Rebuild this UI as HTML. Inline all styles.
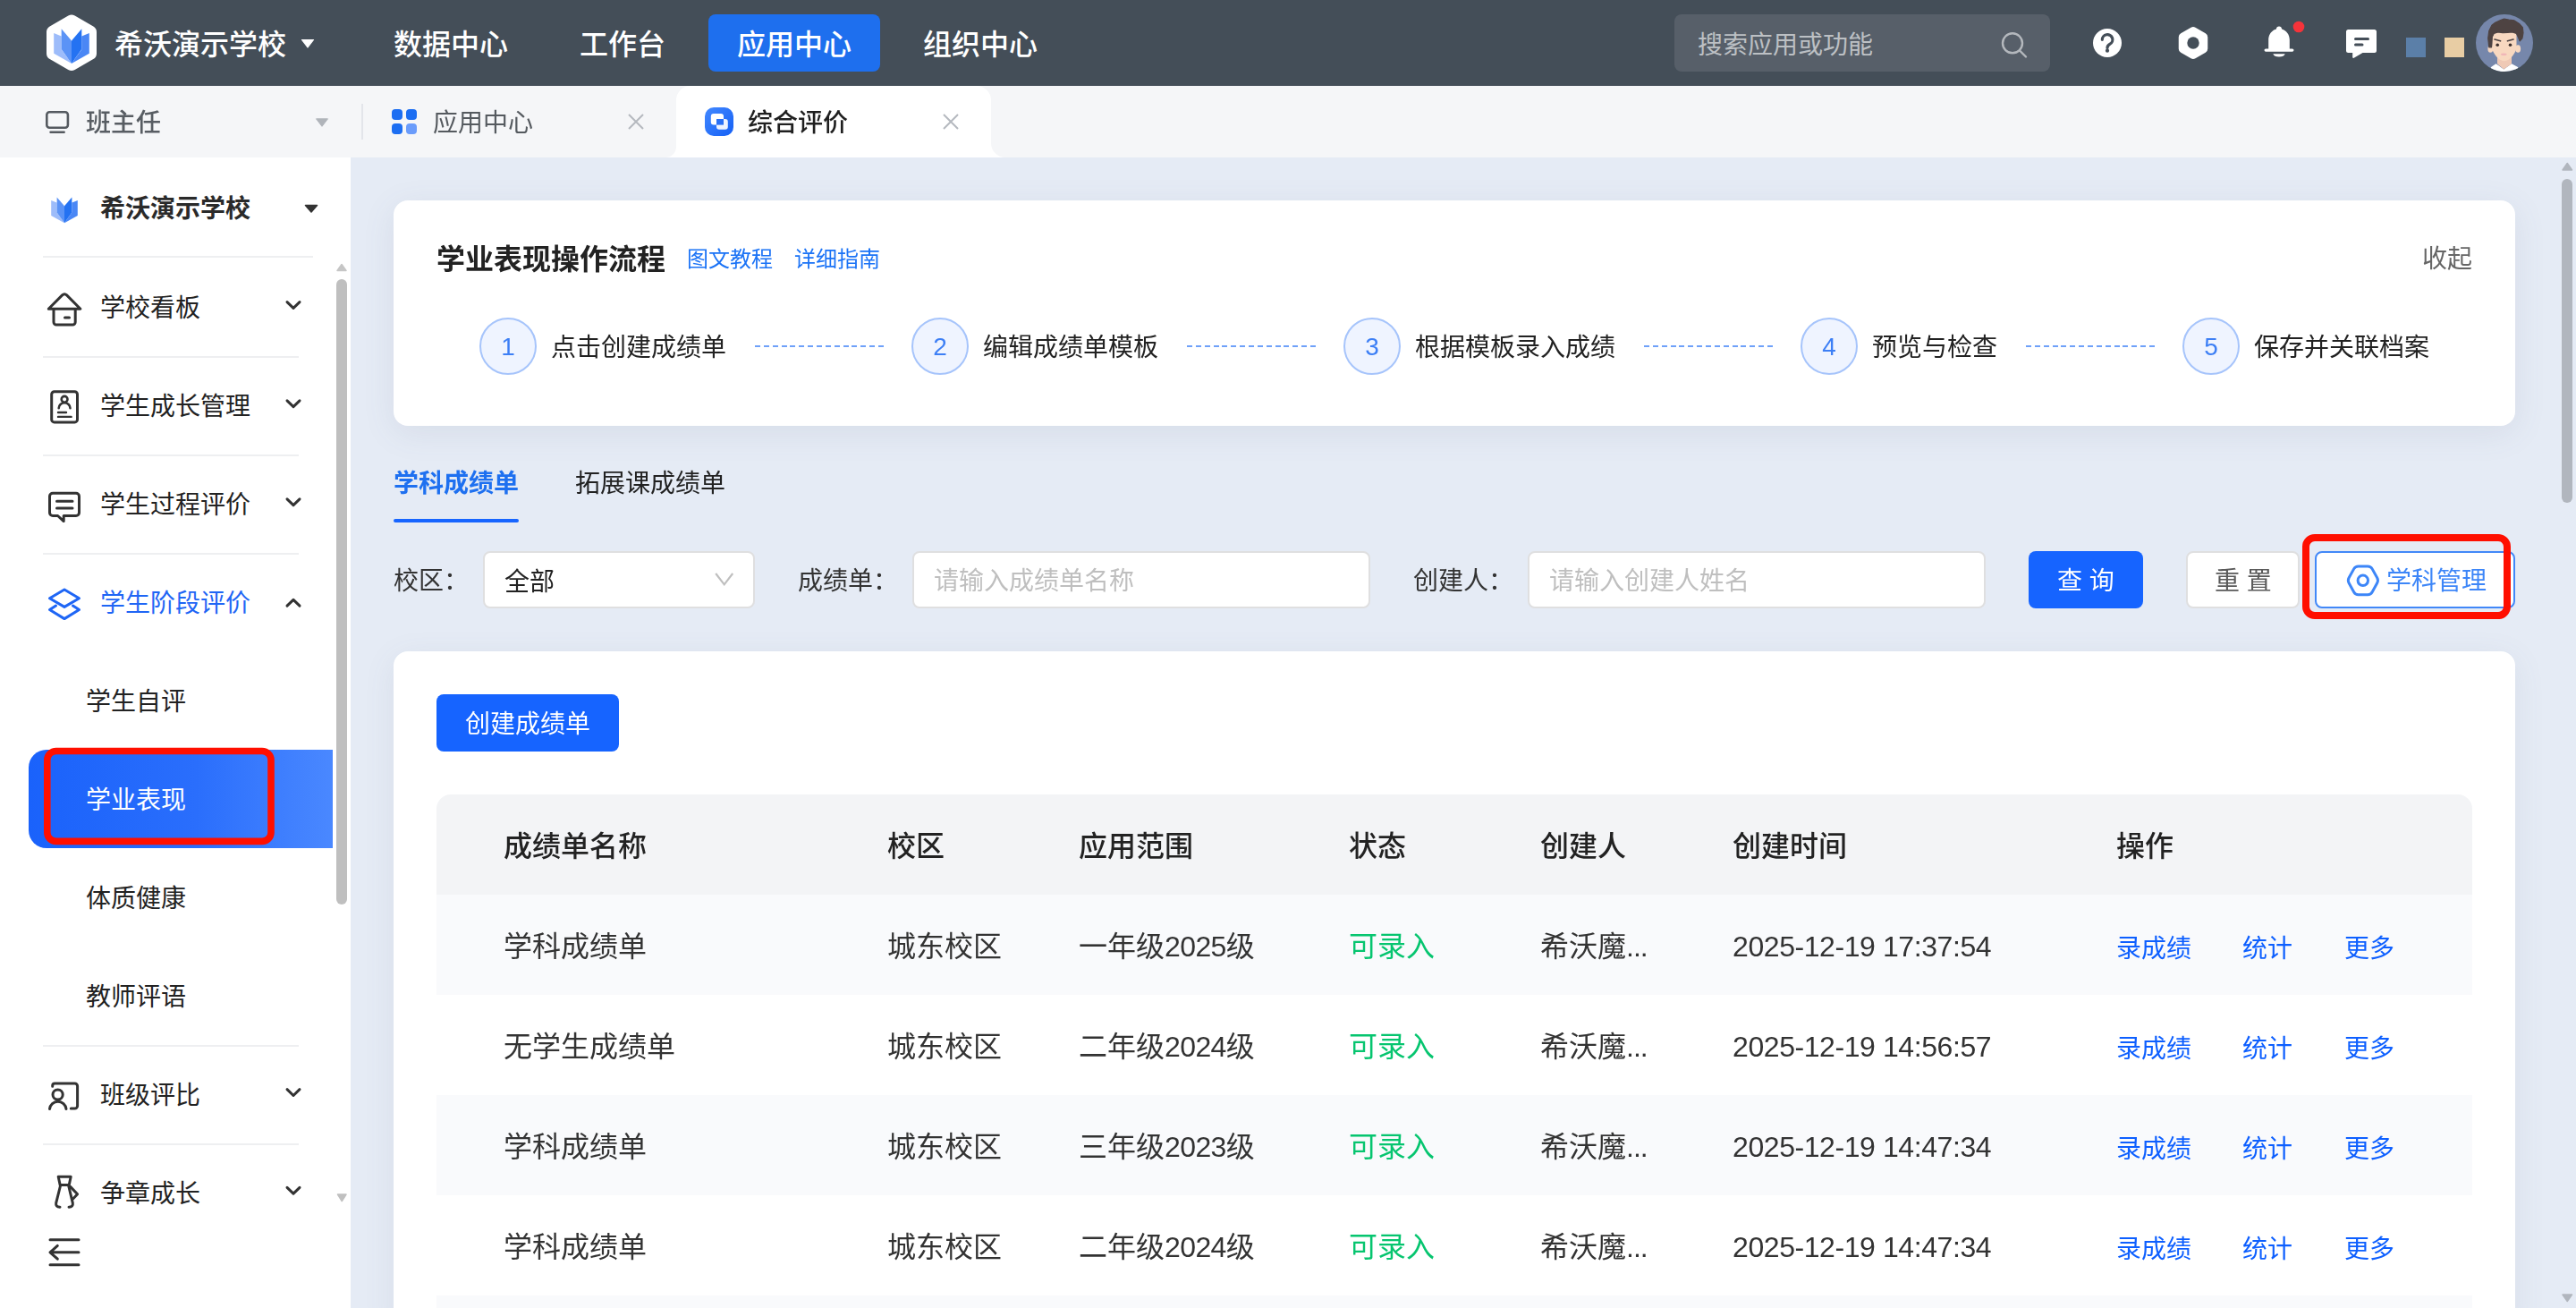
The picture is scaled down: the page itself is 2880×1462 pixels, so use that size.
<!DOCTYPE html>
<html lang="zh-CN">
<head>
<meta charset="utf-8">
<title>综合评价 - 学业表现</title>
<style>
*{box-sizing:border-box;margin:0;padding:0}
html,body{width:2880px;height:1462px;overflow:hidden;background:#e5ebf5}
body{font-family:"Liberation Sans","Noto Sans CJK SC",sans-serif;color:#222;position:relative;font-size:28px}
.a{position:absolute}
.t{position:absolute;white-space:nowrap;line-height:40px;height:40px;will-change:transform}
.l{will-change:auto}
svg{position:absolute;display:block;overflow:visible;left:0;top:0;pointer-events:none}
</style>
</head>
<body>
<header>
<div class="a" style="left:0px;top:0px;width:2880px;height:96px;background:#444e58"></div>
<div class="a" style="left:792px;top:16px;width:192px;height:64px;background:#1e6fee;border-radius:8px"></div>
<div class="t l" style="left:128px;top:30.2px;font-size:32px;color:#fff;font-weight:500;">希沃演示学校</div>
<div class="t l" style="left:440px;top:30.2px;font-size:32px;color:#fff;font-weight:500;">数据中心</div>
<div class="t l" style="left:648px;top:30.2px;font-size:32px;color:#fff;font-weight:500;">工作台</div>
<div class="t l" style="left:824px;top:30.2px;font-size:32px;color:#fff;font-weight:500;">应用中心</div>
<div class="t l" style="left:1032px;top:30.2px;font-size:32px;color:#fff;font-weight:500;">组织中心</div>
<div class="a" style="left:1872px;top:16px;width:420px;height:64px;background:#575f69;border-radius:8px"></div>
<div class="t l" style="left:1898px;top:30.7px;font-size:28px;color:#bcc0c4;">搜索应用或功能</div>
<div class="a" style="left:2690px;top:42px;width:22px;height:22px;background:#5b7fa8"></div>
<div class="a" style="left:2733px;top:42px;width:22px;height:22px;background:#e8cda4"></div>
<div class="a" style="left:0px;top:96px;width:2880px;height:80px;background:#f5f6f8"></div>
<div class="t" style="left:96px;top:118.3px;font-size:28px;color:#585d63;font-weight:500;">班主任</div>
<div class="a" style="left:404px;top:116px;width:2px;height:40px;background:#e3e5ea"></div>
<div class="t" style="left:484px;top:118.3px;font-size:28px;color:#555a5f;">应用中心</div>
<div class="a" style="left:756px;top:96px;width:352px;height:80px;background:#fff;border-radius:16px 16px 0 0"></div>
<div class="t" style="left:836px;top:118.3px;font-size:28px;color:#1f1f1f;font-weight:500;">综合评价</div>
</header>
<aside>
<div class="a" style="left:0px;top:176px;width:392px;height:1286px;background:#fff"></div>
<div class="t l" style="left:112px;top:214.1px;font-size:28px;color:#2a2a2a;font-weight:700;">希沃演示学校</div>
<div class="a" style="left:48px;top:286px;width:302px;height:2px;background:#eeeff1"></div>
<div class="t l" style="left:112px;top:325.1px;font-size:28px;color:#222;">学校看板</div>
<div class="a" style="left:48px;top:398px;width:286px;height:2px;background:#eeeff1"></div>
<div class="t l" style="left:112px;top:435.1px;font-size:28px;color:#222;">学生成长管理</div>
<div class="a" style="left:48px;top:508px;width:286px;height:2px;background:#eeeff1"></div>
<div class="t l" style="left:112px;top:545.1px;font-size:28px;color:#222;">学生过程评价</div>
<div class="a" style="left:48px;top:618px;width:286px;height:2px;background:#eeeff1"></div>
<div class="t l" style="left:112px;top:655.1px;font-size:28px;color:#1f66f5;">学生阶段评价</div>
<div class="t l" style="left:96px;top:765.1px;font-size:28px;color:#222;">学生自评</div>
<div class="a" style="left:32px;top:838px;width:340px;height:110px;background:linear-gradient(90deg,#1a62fb 0%,#2a6efc 55%,#4a88ff 100%);border-radius:20px 0 0 20px"></div>
<div class="t l" style="left:96px;top:875.1px;font-size:28px;color:#fff;">学业表现</div>
<div class="t l" style="left:96px;top:985.1px;font-size:28px;color:#222;">体质健康</div>
<div class="t l" style="left:96px;top:1095.1px;font-size:28px;color:#222;">教师评语</div>
<div class="a" style="left:48px;top:1168px;width:286px;height:2px;background:#eeeff1"></div>
<div class="t l" style="left:112px;top:1205.1px;font-size:28px;color:#222;">班级评比</div>
<div class="a" style="left:48px;top:1278px;width:286px;height:2px;background:#eeeff1"></div>
<div class="t l" style="left:112px;top:1315.1px;font-size:28px;color:#222;">争章成长</div>
<div class="a" style="left:376px;top:312px;width:12px;height:699px;background:#bfbfbf;border-radius:6px"></div>
</aside>
<main>
<div class="a" style="left:392px;top:176px;width:2488px;height:1286px;background:#e5ebf5"></div>
<div class="a" style="left:440px;top:224px;width:2372px;height:252px;background:#fff;border-radius:16px;box-shadow:0 8px 36px rgba(84,96,124,.10)"></div>
<div class="t" style="left:488px;top:269.7px;font-size:32px;color:#222;font-weight:700;">学业表现操作流程</div>
<div class="t" style="left:768px;top:269.9px;font-size:24px;color:#1b73f6;">图文教程</div>
<div class="t" style="left:888px;top:269.9px;font-size:24px;color:#1b73f6;">详细指南</div>
<div class="t" style="left:2708px;top:270.3px;font-size:28px;color:#666;">收起</div>
<div class="a" style="left:536px;top:355px;width:64px;height:64px;background:#eff4ff;border:2px solid #a6c4fb;border-radius:50%"></div>
<div class="t" style="left:536px;top:367.9px;width:64px;text-align:center;font-size:28px;color:#3d7ff5">1</div>
<div class="t" style="left:616.2px;top:369px;font-size:28px;color:#222;">点击创建成绩单</div>
<div class="a" style="left:844px;top:386px;width:144px;height:2px;background:repeating-linear-gradient(90deg,#6fa1f9 0,#6fa1f9 6px,transparent 6px,transparent 9.857px)"></div>
<div class="a" style="left:1019px;top:355px;width:64px;height:64px;background:#eff4ff;border:2px solid #a6c4fb;border-radius:50%"></div>
<div class="t" style="left:1019px;top:367.9px;width:64px;text-align:center;font-size:28px;color:#3d7ff5">2</div>
<div class="t" style="left:1099.2px;top:369px;font-size:28px;color:#222;">编辑成绩单模板</div>
<div class="a" style="left:1327px;top:386px;width:144px;height:2px;background:repeating-linear-gradient(90deg,#6fa1f9 0,#6fa1f9 6px,transparent 6px,transparent 9.857px)"></div>
<div class="a" style="left:1502px;top:355px;width:64px;height:64px;background:#eff4ff;border:2px solid #a6c4fb;border-radius:50%"></div>
<div class="t" style="left:1502px;top:367.9px;width:64px;text-align:center;font-size:28px;color:#3d7ff5">3</div>
<div class="t" style="left:1582.2px;top:369px;font-size:28px;color:#222;">根据模板录入成绩</div>
<div class="a" style="left:1838px;top:386px;width:144px;height:2px;background:repeating-linear-gradient(90deg,#6fa1f9 0,#6fa1f9 6px,transparent 6px,transparent 9.857px)"></div>
<div class="a" style="left:2013px;top:355px;width:64px;height:64px;background:#eff4ff;border:2px solid #a6c4fb;border-radius:50%"></div>
<div class="t" style="left:2013px;top:367.9px;width:64px;text-align:center;font-size:28px;color:#3d7ff5">4</div>
<div class="t" style="left:2093.2px;top:369px;font-size:28px;color:#222;">预览与检查</div>
<div class="a" style="left:2265px;top:386px;width:144px;height:2px;background:repeating-linear-gradient(90deg,#6fa1f9 0,#6fa1f9 6px,transparent 6px,transparent 9.857px)"></div>
<div class="a" style="left:2440px;top:355px;width:64px;height:64px;background:#eff4ff;border:2px solid #a6c4fb;border-radius:50%"></div>
<div class="t" style="left:2440px;top:367.9px;width:64px;text-align:center;font-size:28px;color:#3d7ff5">5</div>
<div class="t" style="left:2520.2px;top:369px;font-size:28px;color:#222;">保存并关联档案</div>
<div class="t" style="left:439.7px;top:521.2px;font-size:28px;color:#1e70f0;font-weight:700;">学科成绩单</div>
<div class="a" style="left:440px;top:580px;width:140px;height:4px;background:#1765ff;border-radius:2px"></div>
<div class="t" style="left:643.4px;top:521px;font-size:28px;color:#222;">拓展课成绩单</div>
<div class="t" style="left:440px;top:630px;font-size:28px;color:#333;">校区：</div>
<div class="a" style="left:540px;top:616px;width:304px;height:64px;background:#fff;border:2px solid #dfdfe0;border-radius:8px"></div>
<div class="t" style="left:564px;top:630.5px;font-size:28px;color:#222;">全部</div>
<div class="t" style="left:892px;top:630px;font-size:28px;color:#333;">成绩单：</div>
<div class="a" style="left:1020px;top:616px;width:512px;height:64px;background:#fff;border:2px solid #dfdfe0;border-radius:8px"></div>
<div class="t" style="left:1044px;top:630.3px;font-size:28px;color:#bfbfbf;">请输入成绩单名称</div>
<div class="t" style="left:1580px;top:630px;font-size:28px;color:#333;">创建人：</div>
<div class="a" style="left:1708px;top:616px;width:512px;height:64px;background:#fff;border:2px solid #dfdfe0;border-radius:8px"></div>
<div class="t" style="left:1732px;top:630.3px;font-size:28px;color:#bfbfbf;">请输入创建人姓名</div>
<div class="a" style="left:2268px;top:616px;width:128px;height:64px;background:#1664ff;border-radius:8px"></div>
<div class="t" style="left:2300px;top:630.1px;font-size:28px;color:#fff;">查 询</div>
<div class="a" style="left:2444px;top:616px;width:127px;height:64px;background:#fff;border:2px solid #dfdfe0;border-radius:8px"></div>
<div class="t" style="left:2476px;top:630.3px;font-size:28px;color:#595959;">重 置</div>
<div class="a" style="left:2588px;top:616px;width:224px;height:64px;background:#fff;border:2px solid #4288f8;border-radius:8px"></div>
<div class="t" style="left:2668px;top:630.3px;font-size:28px;color:#3d86f8;">学科管理</div>
<div class="a" style="left:440px;top:728px;width:2372px;height:760px;background:#fff;border-radius:16px;box-shadow:0 8px 36px rgba(84,96,124,.09)"></div>
<div class="a" style="left:488px;top:776px;width:204px;height:64px;background:#1664ff;border-radius:8px"></div>
<div class="t" style="left:520px;top:790.3px;font-size:28px;color:#fff;">创建成绩单</div>
<div class="a" style="left:488px;top:888px;width:2276px;height:112px;background:#f3f4f6;border-radius:16px 16px 0 0"></div>
<div class="t" style="left:563.2px;top:925.6px;font-size:32px;color:#222;font-weight:500;">成绩单名称</div>
<div class="t" style="left:991.8px;top:925.6px;font-size:32px;color:#222;font-weight:500;">校区</div>
<div class="t" style="left:1206.2px;top:925.6px;font-size:32px;color:#222;font-weight:500;">应用范围</div>
<div class="t" style="left:1508.2px;top:925.6px;font-size:32px;color:#222;font-weight:500;">状态</div>
<div class="t" style="left:1721.7px;top:925.6px;font-size:32px;color:#222;font-weight:500;">创建人</div>
<div class="t" style="left:1936.7px;top:925.6px;font-size:32px;color:#222;font-weight:500;">创建时间</div>
<div class="t" style="left:2365.7px;top:925.6px;font-size:32px;color:#222;font-weight:500;">操作</div>
<div class="a" style="left:488px;top:1000px;width:2276px;height:112px;background:#f9fafc"></div>
<div class="a" style="left:488px;top:1224px;width:2276px;height:112px;background:#f9fafc"></div>
<div class="a" style="left:488px;top:1448px;width:2276px;height:112px;background:#f9fafc"></div>
<div class="t" style="left:563.2px;top:1037.6px;font-size:32px;color:#333;">学科成绩单</div>
<div class="t" style="left:991.8px;top:1037.6px;font-size:32px;color:#333;">城东校区</div>
<div class="t" style="left:1206.2px;top:1037.6px;font-size:32px;color:#333;">一年级<span style="letter-spacing:-.6px">2025</span>级</div>
<div class="t" style="left:1508.2px;top:1037.6px;font-size:32px;color:#06c56f;">可录入</div>
<div class="t" style="left:1721.7px;top:1037.6px;font-size:32px;color:#333;">希沃魔<span style="letter-spacing:-1px">...</span></div>
<div class="t" style="left:1936.7px;top:1037.6px;font-size:32px;color:#333;letter-spacing:-.42px;">2025-12-19 17:37:54</div>
<div class="t" style="left:2365.6px;top:1040.8px;font-size:28px;color:#0d5fff;">录成绩</div>
<div class="t" style="left:2507.4px;top:1040.8px;font-size:28px;color:#0d5fff;">统计</div>
<div class="t" style="left:2621.4px;top:1040.8px;font-size:28px;color:#0d5fff;">更多</div>
<div class="t" style="left:563.2px;top:1149.6px;font-size:32px;color:#333;">无学生成绩单</div>
<div class="t" style="left:991.8px;top:1149.6px;font-size:32px;color:#333;">城东校区</div>
<div class="t" style="left:1206.2px;top:1149.6px;font-size:32px;color:#333;">二年级<span style="letter-spacing:-.6px">2024</span>级</div>
<div class="t" style="left:1508.2px;top:1149.6px;font-size:32px;color:#06c56f;">可录入</div>
<div class="t" style="left:1721.7px;top:1149.6px;font-size:32px;color:#333;">希沃魔<span style="letter-spacing:-1px">...</span></div>
<div class="t" style="left:1936.7px;top:1149.6px;font-size:32px;color:#333;letter-spacing:-.42px;">2025-12-19 14:56:57</div>
<div class="t" style="left:2365.6px;top:1152.8px;font-size:28px;color:#0d5fff;">录成绩</div>
<div class="t" style="left:2507.4px;top:1152.8px;font-size:28px;color:#0d5fff;">统计</div>
<div class="t" style="left:2621.4px;top:1152.8px;font-size:28px;color:#0d5fff;">更多</div>
<div class="t" style="left:563.2px;top:1261.6px;font-size:32px;color:#333;">学科成绩单</div>
<div class="t" style="left:991.8px;top:1261.6px;font-size:32px;color:#333;">城东校区</div>
<div class="t" style="left:1206.2px;top:1261.6px;font-size:32px;color:#333;">三年级<span style="letter-spacing:-.6px">2023</span>级</div>
<div class="t" style="left:1508.2px;top:1261.6px;font-size:32px;color:#06c56f;">可录入</div>
<div class="t" style="left:1721.7px;top:1261.6px;font-size:32px;color:#333;">希沃魔<span style="letter-spacing:-1px">...</span></div>
<div class="t" style="left:1936.7px;top:1261.6px;font-size:32px;color:#333;letter-spacing:-.42px;">2025-12-19 14:47:34</div>
<div class="t" style="left:2365.6px;top:1264.8px;font-size:28px;color:#0d5fff;">录成绩</div>
<div class="t" style="left:2507.4px;top:1264.8px;font-size:28px;color:#0d5fff;">统计</div>
<div class="t" style="left:2621.4px;top:1264.8px;font-size:28px;color:#0d5fff;">更多</div>
<div class="t" style="left:563.2px;top:1373.6px;font-size:32px;color:#333;">学科成绩单</div>
<div class="t" style="left:991.8px;top:1373.6px;font-size:32px;color:#333;">城东校区</div>
<div class="t" style="left:1206.2px;top:1373.6px;font-size:32px;color:#333;">二年级<span style="letter-spacing:-.6px">2024</span>级</div>
<div class="t" style="left:1508.2px;top:1373.6px;font-size:32px;color:#06c56f;">可录入</div>
<div class="t" style="left:1721.7px;top:1373.6px;font-size:32px;color:#333;">希沃魔<span style="letter-spacing:-1px">...</span></div>
<div class="t" style="left:1936.7px;top:1373.6px;font-size:32px;color:#333;letter-spacing:-.42px;">2025-12-19 14:47:34</div>
<div class="t" style="left:2365.6px;top:1376.8px;font-size:28px;color:#0d5fff;">录成绩</div>
<div class="t" style="left:2507.4px;top:1376.8px;font-size:28px;color:#0d5fff;">统计</div>
<div class="t" style="left:2621.4px;top:1376.8px;font-size:28px;color:#0d5fff;">更多</div>
<div class="a" style="left:2864px;top:200px;width:12px;height:362px;background:#b1b6be;border-radius:6px"></div>
</main>
<svg width="2880" height="1462" viewBox="0 0 2880 1462">
<path d="M80 23.9 L100.7 35.85 L100.7 59.75 L80 71.7 L59.3 59.75 L59.3 35.85 Z" fill="#fff" stroke="#fff" stroke-width="14.6" stroke-linejoin="round"/><polygon points="60.2,37.0 68.7,40.5 68.7,55.3 80.0,70.9 60.2,59.8" fill="#9dbcfa"/><polygon points="99.8,37.0 91.3,40.5 91.3,55.3 80.0,70.9 99.8,59.8" fill="#4a87f5"/><polygon points="68.7,32.3 80.0,45.5 80.0,70.9 68.7,55.0" fill="#5b93f6"/><polygon points="91.3,32.3 80.0,45.5 80.0,70.9 91.3,55.0" fill="#2472f2"/><path d="M337.5 44.5 L350.5 44.5 L344 53 Z" fill="#fff" stroke="#fff" stroke-width="1.2" stroke-linejoin="round"/><circle cx="2250" cy="48.3" r="11" fill="none" stroke="#b4b8bd" stroke-width="2.4"/><path d="M2258 56.5 L2265 63.5" stroke="#b4b8bd" stroke-width="2.4" stroke-linecap="round"/><circle cx="2356" cy="48" r="16" fill="#fff"/><path d="M2350.3 44.3 a5.8 5.6 0 1 1 8.7 4.8 c-2 1.2 -3 2.100 -3 4.300" fill="none" stroke="#444e58" stroke-width="3.200" stroke-linecap="round"/><circle cx="2356" cy="56.700" r="2.100" fill="#444e58"/><path d="M2452 34.95 L2463.3 41.5 L2463.3 54.5 L2452 61.05 L2440.7 54.5 L2440.7 41.5 Z" fill="#fff" stroke="#fff" stroke-width="9.9" stroke-linejoin="round"/><circle cx="2452" cy="48" r="6.7" fill="#444e58"/><path d="M2548 29.6 c1.7 0 3 1.2 3.1 2.8 c5.2 1.5 8.7 6.2 8.7 12 v10 h3 a1.7 1.7 0 0 1 0 3.4 h-29.6 a1.7 1.7 0 0 1 0 -3.4 h3 v-10 c0 -5.8 3.500 -10.5 8.700 -12 c.1 -1.6 1.400 -2.800 3.100 -2.800 z" fill="#fff"/><path d="M2541.3 60.3 h13.4 a6.9 4.3 0 0 1 -13.4 0 z" fill="#fff"/><circle cx="2570" cy="30" r="6.3" fill="#f5333a"/><path d="M2625.500 33 h29 a2.500 2.500 0 0 1 2.500 2.500 v21 a2.500 2.500 0 0 1 -2.500 2.500 h-13 l-9.800 5.800 a1 1 0 0 1 -1.500 -.9 v-4.900 h-4.700 a2.500 2.500 0 0 1 -2.500 -2.500 v-21 a2.500 2.500 0 0 1 2.500 -2.500 z" fill="#fff"/><path d="M2633.500 43.500 h14 M2633.500 50 h7.500" stroke="#444e58" stroke-width="3" stroke-linecap="round"/><clipPath id="av"><circle cx="2800" cy="48" r="32"/></clipPath><circle cx="2800" cy="48" r="32" fill="#7687ab"/><g clip-path="url(#av)"><path d="M2783 82 L2785 75 L2790.5 71.3 L2799.3 77.4 L2808 71.3 L2815 75 L2817 82 Z" fill="#fff"/><path d="M2792 60 h16 v11.3 l-8.700 6.100 l-7.300 -6.100 z" fill="#efc9b5"/><ellipse cx="2784.300" cy="54.500" rx="2.900" ry="4.300" fill="#f8d8c0"/><ellipse cx="2815.200" cy="54.500" rx="2.900" ry="4.300" fill="#f8d8c0"/><path d="M2786 33 H2813.500 V52 C2813.500 58 2808.500 64 2804.500 66.800 C2801.500 68.600 2798 68.600 2795 66.800 C2791 64 2786 58 2786 52 Z" fill="#f8d8c0"/><path d="M2782.800 52.800 L2781.700 42.800 L2782.800 34.400 L2785.900 28.300 L2789.700 25.200 L2795 22.900 L2799.600 21 L2805 22.200 L2811.100 22.900 L2816.500 26.400 L2820.300 30.600 L2821 36.700 L2819.900 42.800 L2817.200 45.900 L2815.300 41.300 L2813.400 37.500 L2808.800 35.900 L2803.500 36.300 L2798.100 36.700 L2792.800 35.900 L2788.200 37.500 L2786.300 41.300 L2785.900 48.900 L2785.500 52.800 Z" fill="#4e4342" stroke="#4e4342" stroke-width="1.200" stroke-linejoin="round"/><circle cx="2792.200" cy="50.200" r="1.800" fill="#3d302d"/><circle cx="2806.500" cy="50.200" r="1.800" fill="#3d302d"/><path d="M2789 44 l6.500 1.800 M2810 44 l-6.500 1.800" stroke="#4e4342" stroke-width="1.700" stroke-linecap="round"/><ellipse cx="2799.300" cy="60.800" rx="3.300" ry="1.300" fill="#f0b6b8"/></g>
<rect x="52.300" y="125.300" width="23.600" height="17.400" rx="3" fill="none" stroke="#555a60" stroke-width="2.600"/><path d="M56.500 147.800 h15.200" stroke="#555a60" stroke-width="2.400" stroke-linecap="round"/><path d="M353.500 132.800 h13 l-6.500 8.500 z" fill="#b0b4ba" stroke="#b0b4ba" stroke-width="1" stroke-linejoin="round"/><rect x="438" y="122" width="12" height="12" rx="4" fill="#1c6ef2"/><rect x="454" y="122" width="12" height="12" rx="4" fill="#1c6ef2"/><rect x="438" y="138" width="12" height="12" rx="4" fill="#1c6ef2"/><rect x="454" y="138" width="12" height="12" rx="4" fill="#6a9cfb"/><path d="M703 128 L719 144 M719 128 L703 144" fill="none" stroke="#b5b9bf" stroke-width="2"/><path d="M744 176 h12 v-12 a12 12 0 0 1 -12 12 z" fill="#fff"/><path d="M1124 176 h-16 v-16 a16 16 0 0 0 16 16 z" fill="#fff"/><defs><linearGradient id="ga" x1="0" y1="0" x2="1" y2="1"><stop offset="0" stop-color="#4288ff"/><stop offset="1" stop-color="#1560f5"/></linearGradient></defs><rect x="788" y="120" width="32" height="32" rx="10" fill="url(#ga)"/><rect x="794.800" y="127" width="14.200" height="12.600" rx="3" fill="#fff"/><rect x="801" y="133" width="12.800" height="11.800" rx="3" fill="#eef3ff"/><rect x="801" y="133" width="8" height="6.600" fill="#2a70f5"/><path d="M1055 128 L1071 144 M1071 128 L1055 144" fill="none" stroke="#b5b9bf" stroke-width="2"/>
<polygon points="57.2,224.0 63.6,226.6 63.6,237.6 72.0,249.3 57.2,241.0" fill="#9dbcfa"/><polygon points="86.8,224.0 80.4,226.6 80.4,237.6 72.0,249.3 86.8,241.0" fill="#4a87f5"/><polygon points="63.6,220.5 72.0,230.3 72.0,249.3 63.6,237.4" fill="#5b93f6"/><polygon points="80.4,220.5 72.0,230.3 72.0,249.3 80.4,237.4" fill="#2472f2"/><path d="M341.500 229.500 h13 l-6.500 7.500 z" fill="#333" stroke="#333" stroke-width="1.600" stroke-linejoin="round"/><path d="M377 302.500 h10 l-5 -7 z" fill="#c6c6c6" stroke="#c6c6c6" stroke-width="1.500" stroke-linejoin="round"/><path d="M377.500 1335 h9.500 l-4.750 7.500 z" fill="#c0c0c0" stroke="#c0c0c0" stroke-width="1.500" stroke-linejoin="round"/><path d="M54.3 345.3 L69.6 329.9 Q72.1 327.4 74.6 329.9 L89.9 345.3 Z" fill="none" stroke="#333" stroke-width="3" stroke-linecap="round" stroke-linejoin="round"/><path d="M60 345.5 V360.100 a3 3 0 0 0 3 3 H81.200 a3 3 0 0 0 3 -3 V345.5" fill="none" stroke="#333" stroke-width="3" stroke-linecap="round" stroke-linejoin="round"/><path d="M72.500 355 h5" fill="none" stroke="#333" stroke-width="3" stroke-linecap="round" stroke-linejoin="round"/><path d="M321 337.6 L328 344.4 L335 337.6" fill="none" stroke="#333" stroke-width="3" stroke-linecap="round" stroke-linejoin="round"/><rect x="57.700" y="437.700" width="28.800" height="34.200" rx="3" fill="none" stroke="#333" stroke-width="3" stroke-linecap="round" stroke-linejoin="round"/><circle cx="72.100" cy="446.300" r="3.400" fill="none" stroke="#333" stroke-width="2.600"/><path d="M65.700 456.200 a6.400 6 0 0 1 12.800 0" fill="none" stroke="#333" stroke-width="2.600" stroke-linecap="round"/><path d="M65 461 h9 M65 465.900 h14.600" fill="none" stroke="#333" stroke-width="2.400" stroke-linecap="round"/><path d="M321 447.8 L328 454.59999999999997 L335 447.8" fill="none" stroke="#333" stroke-width="3" stroke-linecap="round" stroke-linejoin="round"/><path d="M59 551.300 H85 a3.500 3.500 0 0 1 3.500 3.500 V573 a3.500 3.500 0 0 1 -3.500 3.500 H71.200 V582.600 L64.600 576.500 H59 a3.500 3.500 0 0 1 -3.500 -3.500 V554.800 a3.500 3.500 0 0 1 3.500 -3.500 Z" fill="none" stroke="#333" stroke-width="3" stroke-linecap="round" stroke-linejoin="round"/><path d="M63.500 560.300 h17.500 M63.500 568 h17.500" fill="none" stroke="#333" stroke-width="3" stroke-linecap="round" stroke-linejoin="round"/><path d="M321 557.9 L328 564.6999999999999 L335 557.9" fill="none" stroke="#333" stroke-width="3" stroke-linecap="round" stroke-linejoin="round"/><path d="M72 659 L88.500 668.700 L72 678.400 L55.500 668.700 Z" fill="none" stroke="#1f66f5" stroke-width="3" stroke-linecap="round" stroke-linejoin="round"/><path d="M62.500 677 L55.500 681.500 L72 691.600 L88.500 681.500 L81.500 677" fill="none" stroke="#1f66f5" stroke-width="3" stroke-linecap="round" stroke-linejoin="round"/><path d="M321 677.1 L328 670.3000000000001 L335 677.1" fill="none" stroke="#333" stroke-width="3" stroke-linecap="round" stroke-linejoin="round"/><path d="M58.700 1214.300 V1213.500 a2.500 2.500 0 0 1 2.500 -2.500 H83.600 a3 3 0 0 1 3 3 V1236 a3 3 0 0 1 -3 3 H79.300" fill="none" stroke="#333" stroke-width="3" stroke-linecap="round" stroke-linejoin="round"/><circle cx="64.600" cy="1223.500" r="5.600" fill="none" stroke="#333" stroke-width="3" stroke-linecap="round" stroke-linejoin="round"/><path d="M55.500 1239.500 a9.300 9.300 0 0 1 18.500 0" fill="none" stroke="#333" stroke-width="3" stroke-linecap="round" stroke-linejoin="round"/><path d="M321 1217.6999999999998 L328 1224.5 L335 1217.6999999999998" fill="none" stroke="#333" stroke-width="3" stroke-linecap="round" stroke-linejoin="round"/><path d="M65.2 1315.3 H79.2 L77.2 1324.6 H67.2 Z" fill="none" stroke="#333" stroke-width="3" stroke-linecap="round" stroke-linejoin="round"/><path d="M67.6 1325 L62.7 1344.6 Q62 1349 67 1349.2 M76.6 1325 L81.3 1344.6 Q82 1349 77 1349.2" fill="none" stroke="#333" stroke-width="3" stroke-linecap="round" stroke-linejoin="round"/><path d="M78.6 1326.4 L86.6 1334.8 L81.6 1340" fill="none" stroke="#333" stroke-width="3" stroke-linecap="round" stroke-linejoin="round"/><path d="M321 1327.3999999999999 L328 1334.2 L335 1327.3999999999999" fill="none" stroke="#333" stroke-width="3" stroke-linecap="round" stroke-linejoin="round"/><path d="M56 1385.700 H88 M56 1399.700 H88 M56 1413.700 H88 M64.300 1392.400 L56 1399.800 L64.300 1407.200" fill="none" stroke="#333" stroke-width="3" stroke-linecap="round" stroke-linejoin="round"/><rect x="52.8" y="839.5" width="250.2" height="100.9" rx="10" fill="none" stroke="#ff0f00" stroke-width="7.6"/>
<path d="M800.2 641 L809.7 653.3 L819.2 641" fill="none" stroke="#bfbfbf" stroke-width="2.200" stroke-linejoin="miter"/><path d="M2631.65 635.87 Q2633.30 632.90 2636.70 632.90 L2647.10 632.90 Q2650.50 632.90 2652.15 635.87 L2657.65 645.83 Q2659.30 648.80 2657.65 651.77 L2652.15 661.73 Q2650.50 664.70 2647.10 664.70 L2636.70 664.70 Q2633.30 664.70 2631.65 661.73 L2626.15 651.77 Q2624.50 648.80 2626.15 645.83 Z" fill="none" stroke="#3d86f8" stroke-width="3" stroke-linejoin="round"/><circle cx="2641.800" cy="648.800" r="5.700" fill="none" stroke="#3d86f8" stroke-width="3"/><rect x="2578" y="601" width="225" height="87" rx="10" fill="none" stroke="#ff0f00" stroke-width="8"/><path d="M2865 190 h10.500 l-5.250 -7.500 z" fill="#b1b6be" stroke="#b1b6be" stroke-width="1.500" stroke-linejoin="round"/><path d="M2865 1447 h10.500 l-5.250 7.500 z" fill="#b1b6be" stroke="#b1b6be" stroke-width="1.500" stroke-linejoin="round"/>
</svg>
</body>
</html>
